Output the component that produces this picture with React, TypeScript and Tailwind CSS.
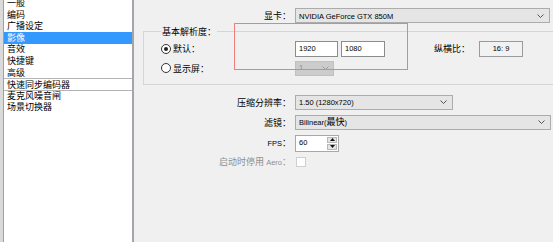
import React from 'react';

// Latin runs are drawn smaller than the CJK text, as in the original dialog
const L = ({ children }: { children: React.ReactNode }) => (
  <span className="font-['Liberation_Sans',sans-serif] text-[7.5px]">{children}</span>
);

const Chevron = ({ color = '#555' }: { color?: string }) => (
  <svg width="7" height="4" viewBox="0 0 7 4" className="shrink-0">
    <polyline points="0.5,0.5 3.5,3.5 6.5,0.5" fill="none" stroke={color} strokeWidth="1" />
  </svg>
);

const Select = ({ width, children }: { width: string; children: React.ReactNode }) => (
  <div
    className={`${width} h-[15px] flex items-center justify-between pl-[3px] pr-[5px] bg-[#e5e5e5] border border-[#acacac]`}
  >
    <span className="leading-none whitespace-nowrap">{children}</span>
    <Chevron />
  </div>
);

const Radio = ({ checked }: { checked?: boolean }) => (
  <span className="w-[10px] h-[10px] rounded-full border border-[#333] bg-white flex items-center justify-center shrink-0">
    {checked && <span className="w-[4px] h-[4px] rounded-full bg-[#222]" />}
  </span>
);

const menu = ['一般', '编码', '广播设定', '影像', '音效', '快捷键', '高级', '快速同步编码器', '麦克风噪音闸', '场景切换器'];

export default function App() {
  return (
    <div className="relative w-[553px] h-[242px] overflow-hidden bg-[#f0f0f0] flex font-['Noto_Sans_CJK_SC',sans-serif] text-[9px] text-black">
      {/* left strip + settings list */}
      <div className="w-[3px] bg-[#dadada] shrink-0" />
      <div className="w-[131px] shrink-0 bg-white border-l border-[#a0a0a0] border-r-2 border-r-[#a4a4ac] overflow-hidden">
        <div className="-mt-[2.8px]">
          {menu.map((item, i) => (
            <div
              key={item}
              className={`h-[11.6px] flex items-center pl-[3px] leading-[10px] ${
                i === 3 ? 'bg-[#3399ff] text-white' : ''
              } ${i === 7 || i === 8 ? 'border-t border-[#b4b4b4]' : ''}`}
            >
              {item}
            </div>
          ))}
        </div>
      </div>

      {/* video settings */}
      <div className="flex-1 flex flex-col pt-[8px] pr-[2px]">
        <div className="flex items-center">
          <div className="w-[157px] text-right leading-none">显卡：</div>
          <div className="ml-[4px]">
            <Select width="w-[255px]">
              <L>NVIDIA GeForce GTX 850M</L>
            </Select>
          </div>
        </div>

        <fieldset className="ml-[9px] -mr-[12px] mt-[3px] border border-[#d5d5d5] pl-[17px] pt-[3.5px] pb-[8px]">
          <legend className="leading-[11px] px-[1px]">基本解析度：</legend>
          <div className="flex items-center h-[16px]">
            <div className="w-[134px] flex items-center gap-[2px]">
              <Radio checked />
              <span className="leading-none">默认：</span>
            </div>
            <div className="w-[43px] h-[16px] bg-white border border-[#8c8c8c] flex items-center pl-[3px]">
              <L>1920</L>
            </div>
            <div className="ml-[3px] w-[44px] h-[16px] bg-white border border-[#8c8c8c] flex items-center pl-[3px]">
              <L>1080</L>
            </div>
            <span className="ml-[49px] leading-none">纵横比：</span>
            <div className="ml-[9px] w-[44px] h-[16px] bg-[#f2f2f2] border border-[#9a9a9a] flex items-center justify-center">
              <L>16: 9</L>
            </div>
          </div>
          <div className="flex items-center h-[15px] mt-[4px]">
            <div className="w-[134px] flex items-center gap-[2px]">
              <Radio />
              <span className="leading-none">显示屏：</span>
            </div>
            <div className="w-[39px] h-[15px] bg-[#cccccc] border border-[#c0c0c0] flex items-center justify-between pl-[3px] pr-[4px] text-[#8a8a8a]">
              <L>1</L>
              <Chevron color="#999" />
            </div>
          </div>
        </fieldset>

        <div className="flex items-center mt-[10px]">
          <div className="w-[157px] text-right leading-none">压缩分辨率：</div>
          <div className="ml-[4px]">
            <Select width="w-[158px]">
              <L>1.50 (1280x720)</L>
            </Select>
          </div>
        </div>

        <div className="flex items-center mt-[5px]">
          <div className="w-[157px] text-right leading-none">滤镜：</div>
          <div className="ml-[4px]">
            <Select width="w-[256px]">
              <L>Bilinear(</L>最快<L>)</L>
            </Select>
          </div>
        </div>

        <div className="flex items-center mt-[5px]">
          <div className="w-[157px] text-right leading-none">
            <L>FPS</L>：
          </div>
          <div className="ml-[4px] w-[44px] h-[17px] flex border border-[#a8a8a8] bg-white">
            <div className="flex-1 flex items-center pl-[3px]">
              <L>60</L>
            </div>
            <div className="w-[12px] flex flex-col gap-[1px] p-[1px] bg-white">
              <div className="flex-1 bg-[#e4e4e4] border border-[#b8b8b8] flex items-center justify-center">
                <svg width="5" height="3" viewBox="0 0 5 3">
                  <polygon points="0,3 2.5,0 5,3" fill="#111" />
                </svg>
              </div>
              <div className="flex-1 bg-[#e4e4e4] border border-[#b8b8b8] flex items-center justify-center">
                <svg width="5" height="3" viewBox="0 0 5 3">
                  <polygon points="0,0 2.5,3 5,0" fill="#111" />
                </svg>
              </div>
            </div>
          </div>
        </div>

        <div className="flex items-center mt-[5px]">
          <div className="w-[157px] text-right leading-none text-[#8f8f8f]">
            启动时停用 <L>Aero</L>：
          </div>
          <div className="ml-[5px] w-[10px] h-[10px] bg-white border border-[#cfcfcf]" />
        </div>
      </div>

      {/* annotation box drawn on top of the screenshot */}
      <div className="absolute left-[234px] top-[23px] w-[174px] h-[47px] border border-[#ee7d7d] pointer-events-none" />
    </div>
  );
}
